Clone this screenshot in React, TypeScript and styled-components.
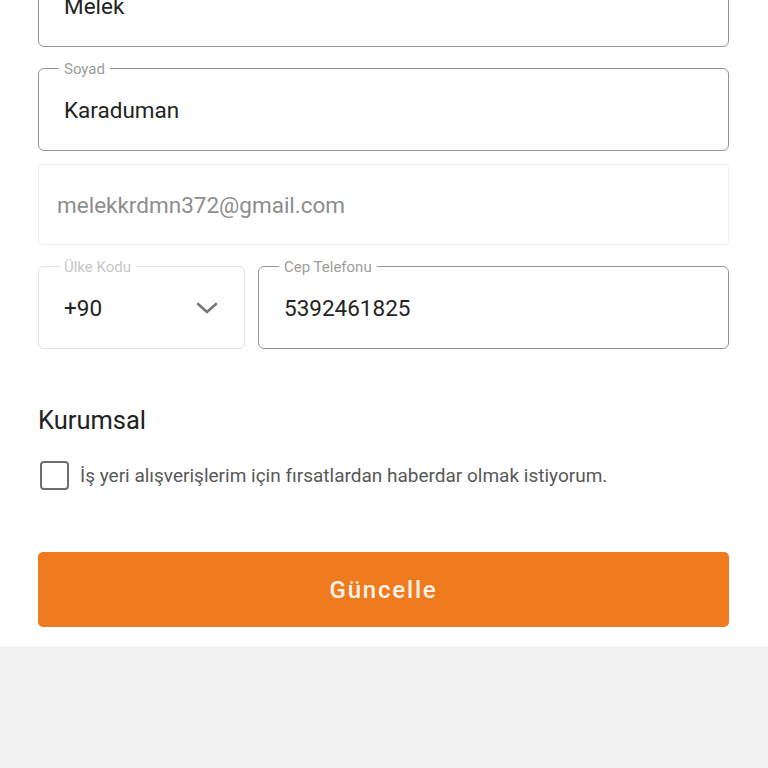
import React, { useState } from 'react';
import styled, { createGlobalStyle } from 'styled-components';

const GlobalStyle = createGlobalStyle`
  html, body {
    margin: 0;
    padding: 0;
    background: #f1f1f1;
    font-family: Roboto, 'Noto Sans', 'Liberation Sans', sans-serif;
    overflow: hidden;
  }
  * {
    box-sizing: border-box;
  }
`;

const Card = styled.div`
  margin-top: -56px;
  background: #fff;
  padding: 20px 39px 19px 38px;
  box-shadow: 0 2px 4px rgba(0, 0, 0, 0.18);
  display: flex;
  flex-direction: column;
`;

const Fields = styled.div`
  display: flex;
  flex-direction: column;
`;

const Row = styled.div`
  display: flex;
  gap: 13px;
`;

const Outlined = styled.div<{ $muted?: boolean; $width?: string; $gap?: number }>`
  position: relative;
  height: 83px;
  margin-top: ${(p) => p.$gap ?? 0}px;
  flex: ${(p) => (p.$width ? `0 0 ${p.$width}` : '1 1 auto')};
  border: 1.5px solid ${(p) => (p.$muted ? '#e2e2e2' : '#959595')};
  border-radius: 6px;
  display: flex;
  align-items: center;
  padding: 0 24px 0 25px;
`;

const Label = styled.span<{ $muted?: boolean }>`
  position: absolute;
  top: -9px;
  left: 20px;
  padding: 0 5px;
  background: #fff;
  font-size: 15px;
  line-height: 18px;
  color: ${(p) => (p.$muted ? '#c6c6c6' : '#9c9c9c')};
`;

const Value = styled.span`
  flex: 1;
  font-size: 22.5px;
  color: #232323;
`;

const Readonly = styled.div`
  height: 81px;
  margin-top: 13px;
  margin-bottom: 21px;
  border: 1.5px solid #f0f0f0;
  border-radius: 4px;
  display: flex;
  align-items: center;
  padding: 0 18px;
  font-size: 22.5px;
  color: #8d8d8d;
`;

const Chevron = styled.svg`
  width: 22px;
  height: 12px;
  margin-right: 2px;
`;

const Heading = styled.h2`
  margin: 56px 0 0;
  font-size: 25.5px;
  line-height: 30px;
  font-weight: 400;
  color: #222;
`;

const CheckRow = styled.label`
  margin-top: 26px;
  display: flex;
  align-items: center;
  gap: 11px;
  cursor: pointer;
`;

const Box = styled.span<{ $on: boolean }>`
  width: 29px;
  height: 29px;
  margin-left: 2px;
  border: 2.5px solid #6d6d6d;
  border-radius: 4px;
  background: ${(p) => (p.$on ? '#f07a1e' : '#fff')};
`;

const CheckText = styled.span`
  font-size: 19px;
  color: #585858;
`;

const Submit = styled.button`
  margin-top: 62px;
  height: 75px;
  border: 0;
  border-radius: 5px;
  background: #f07a1e;
  color: #fdf4ea;
  font-family: inherit;
  font-size: 24px;
  font-weight: 500;
  letter-spacing: 1.8px;
  cursor: pointer;
`;

export default function App() {
  const [corporate, setCorporate] = useState(false);

  return (
    <>
      <GlobalStyle />
      <Card>
        <Fields>
          <Outlined>
            <Label>Ad</Label>
            <Value>Melek</Value>
          </Outlined>
          <Outlined $gap={21}>
            <Label>Soyad</Label>
            <Value>Karaduman</Value>
          </Outlined>
          <Readonly>melekkrdmn372@gmail.com</Readonly>
          <Row>
            <Outlined $muted $width="207px">
              <Label $muted>Ülke Kodu</Label>
              <Value>+90</Value>
              <Chevron viewBox="0 0 22 12" fill="none">
                <polyline points="2,2 11,10 20,2" stroke="#777" strokeWidth="2.6" strokeLinecap="round" strokeLinejoin="round" />
              </Chevron>
            </Outlined>
            <Outlined>
              <Label>Cep Telefonu</Label>
              <Value>5392461825</Value>
            </Outlined>
          </Row>
        </Fields>

        <Heading>Kurumsal</Heading>
        <CheckRow onClick={() => setCorporate(!corporate)}>
          <Box $on={corporate} />
          <CheckText>İş yeri alışverişlerim için fırsatlardan haberdar olmak istiyorum.</CheckText>
        </CheckRow>

        <Submit>Güncelle</Submit>
      </Card>
    </>
  );
}
